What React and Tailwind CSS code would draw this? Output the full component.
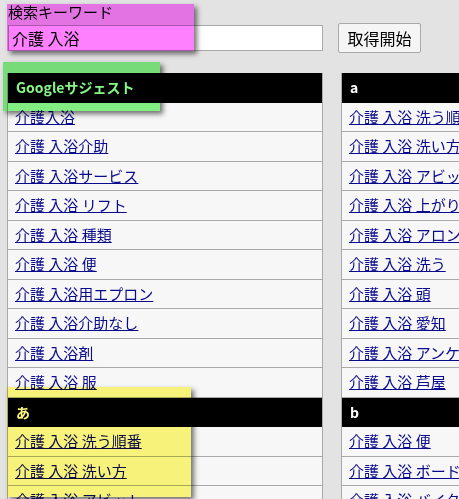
import React from 'react';

const leftGroups = [
  {
    title: 'Googleサジェスト',
    items: [
      '介護入浴',
      '介護 入浴介助',
      '介護 入浴サービス',
      '介護 入浴 リフト',
      '介護 入浴 種類',
      '介護 入浴 便',
      '介護 入浴用エプロン',
      '介護 入浴介助なし',
      '介護 入浴剤',
      '介護 入浴 服',
    ],
  },
  {
    title: 'あ',
    items: ['介護 入浴 洗う順番', '介護 入浴 洗い方', '介護 入浴 アビット', '介護 入浴 上がり湯'],
  },
];

const rightGroups = [
  {
    title: 'a',
    items: [
      '介護 入浴 洗う順番',
      '介護 入浴 洗い方',
      '介護 入浴 アビット',
      '介護 入浴 上がり湯',
      '介護 入浴 アロン化成',
      '介護 入浴 洗う',
      '介護 入浴 頭',
      '介護 入浴 愛知',
      '介護 入浴 アンケート',
      '介護 入浴 芦屋',
    ],
  },
  {
    title: 'b',
    items: ['介護 入浴 便', '介護 入浴 ボード', '介護 入浴 バイタル', '介護 入浴 防水'],
  },
];

const SuggestColumn = ({ groups }) => (
  <div className="w-[316px] shrink-0 border-x border-[#a9a9a9]">
    {groups.map((g) => (
      <div key={g.title}>
        <div className="h-[29.5px] bg-black flex items-center pl-[8px] text-white font-bold text-[14px]">
          {g.title}
        </div>
        {g.items.map((item) => (
          <div
            key={item}
            className="h-[29.5px] bg-[#f7f7f7] border-b border-[#a9a9a9] flex items-center pl-[7px] whitespace-nowrap"
          >
            <a href="#" className="text-[#0a0a8c] underline text-[15px]">
              {item}
            </a>
          </div>
        ))}
      </div>
    ))}
  </div>
);

export default function App() {
  return (
    <div
      className="relative w-[459px] h-[499px] overflow-hidden bg-[#e3e3e3] text-black"
      style={{ fontFamily: '"Noto Sans CJK JP", "Noto Sans", sans-serif' }}
    >
      <div className="pl-[8px] pt-[1px]">
        <div className="text-[15px] leading-[22px]">検索キーワード</div>
        <div className="flex items-center h-[30px]">
          <input
            type="text"
            defaultValue="介護 入浴"
            className="w-[315px] h-[26px] bg-white border border-[#a9a9a9] px-[3px] text-[16px] outline-none"
            style={{ fontFamily: '"Noto Sans CJK JP", sans-serif' }}
          />
          <button
            type="button"
            className="ml-[15px] w-[83px] h-[30px] bg-[#f5f5f5] border border-[#a9a9a9] rounded-[2px] text-[16px]"
          >
            取得開始
          </button>
        </div>
      </div>

      <div className="flex gap-[18px] pl-[7px] mt-[20px]">
        <SuggestColumn groups={leftGroups} />
        <SuggestColumn groups={rightGroups} />
      </div>

      {/* highlight overlays */}
      <div className="absolute left-[7px] top-[4px] w-[187px] h-[47px] bg-[#ff80ff] mix-blend-multiply shadow-[3px_3px_5px_rgba(0,0,0,0.55)]" />
      <div className="absolute left-[3px] top-[62px] w-[157px] h-[49px] bg-[#86f686] mix-blend-multiply shadow-[3px_3px_5px_rgba(0,0,0,0.55)]" />
      <div className="absolute left-[7px] top-[387px] w-[184px] h-[110px] bg-[#fffa7e] mix-blend-multiply shadow-[3px_3px_5px_rgba(0,0,0,0.55)]" />
    </div>
  );
}
